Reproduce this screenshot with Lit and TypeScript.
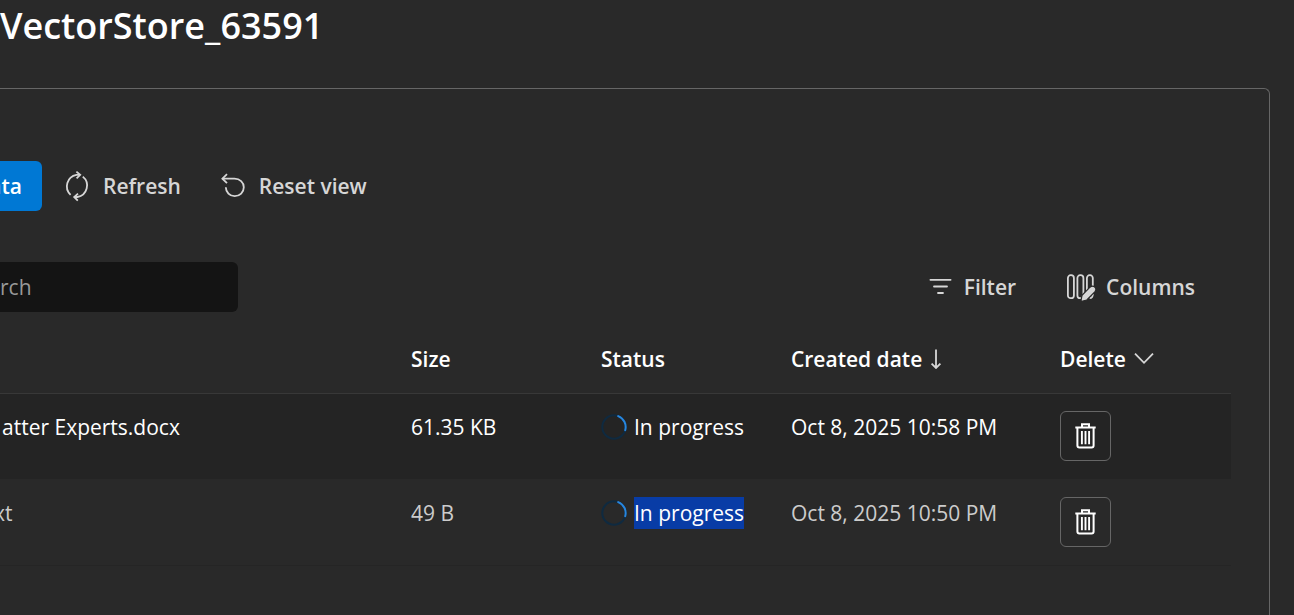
import { LitElement, html, css, svg, nothing } from "lit";
import { customElement, property } from "lit/decorators.js";

interface FileRow {
  name: string;
  size: string;
  status: string;
  created: string;
  active: boolean;
}

const ROWS: FileRow[] = [
  { name: "atter Experts.docx", size: "61.35 KB", status: "In progress", created: "Oct 8, 2025 10:58 PM", active: true },
  { name: "xt", size: "49 B", status: "In progress", created: "Oct 8, 2025 10:50 PM", active: false },
];

const ICONS = {
  refresh: { w: 28, h: 32, body: svg`
    <path d="M7.6 24.8A11.6 11.6 0 0 1 13.4 4.9H16.4M19.8 6.6A11.6 11.6 0 0 1 14.4 27H12" />
    <path d="M13.4 1.6L17.2 4.9L13.6 8.4M15 23.6L11.2 27L14.8 30.6" />` },
  reset: { w: 28, h: 28, body: svg`
    <path d="M3.4 6.7H15.5C20.8 6.7 24.8 10.4 24.8 15.3C24.8 20.3 20.8 24.2 15.7 24.2C10.8 24.2 6.9 20.3 6.8 15.2" />
    <path d="M8 2.2L3.4 6.7L8 11.2" />` },
  filter: { w: 24, h: 20, body: svg`<path d="M2.4 2.8H22.6M6 9.5H19M10 16H15" stroke-linecap="round" />` },
  columns: { w: 30, h: 30, body: svg`
    <rect x="1.9" y="3.2" width="6" height="23" rx="2.8" />
    <rect x="11.4" y="3.2" width="6" height="23" rx="2.8" />
    <path d="M20.9 20V6A2.8 2.8 0 0 1 23.7 3.2H24A2.8 2.8 0 0 1 26.8 6V14M23.6 26.2Q26.8 26 26.8 22" />
    <path d="M14.8 29.6L16 23.4L24 15.2C27.4 12.2 31.8 16.4 28.8 19.8L20.8 28Z" fill="currentColor" stroke="#292929" stroke-width="1.2" />` },
  down: { w: 12, h: 20, body: svg`<path d="M6 .5V19M1.6 14.6L6 19L10.4 14.6" />` },
  chevron: { w: 20, h: 12, body: svg`<path d="M1 .6L10 9.8L19 .6" />` },
  trash: { w: 22, h: 26, body: svg`
    <path d="M7 4.4V1.2H14V4.4M.3 4.4H20.7M2.4 4.4V22.6Q2.4 24.6 4.4 24.6H16.6Q18.6 24.6 18.6 22.6V4.4" stroke-width="2" />
    <path d="M6.9 8V21.2M10.5 8V21.2M14.1 8V21.2" stroke-width="1.9" />` },
};

@customElement("line-icon")
class LineIcon extends LitElement {
  static styles = css`
    :host { display: inline-flex; flex: none; }
    .icon { fill: none; stroke: currentColor; stroke-width: 1.8; display: block; }
  `;
  @property() name: keyof typeof ICONS = "filter";
  render() {
    const i = ICONS[this.name];
    return html`<svg class="icon" width=${i.w} height=${i.h} viewBox="0 0 ${i.w} ${i.h}" aria-hidden="true">${i.body}</svg>`;
  }
}

@customElement("progress-ring")
class ProgressRing extends LitElement {
  static styles = css`
    :host { display: inline-flex; flex: none; }
    .ring { fill: none; stroke-width: 2; }
    .track { stroke: #0f2a40; }
    .arc { stroke: #2886de; stroke-linecap: round; }
  `;
  render() {
    return html`<svg class="ring" width="26" height="26" viewBox="0 0 26 26" aria-hidden="true">
      <circle class="track" cx="13" cy="13" r="11.7" />
      <path class="arc" d="M17.2 2.1A11.7 11.7 0 0 1 24.2 16.2" />
    </svg>`;
  }
}

@customElement("app-root")
class AppRoot extends LitElement {
  static styles = css`
    * { box-sizing: border-box; }
    :host {
      display: flex;
      flex-direction: column;
      min-height: 100vh;
      overflow: hidden;
      background: #292929;
      color: #fff;
      font: 400 21px/32px "Open Sans", "Noto Sans", sans-serif;
    }
    .title { margin: 0; padding-top: 2px; font-size: 36px; line-height: 48px; font-weight: 600; }
    .panel {
      flex: 1;
      margin: 38px 24px 0 0;
      padding: 72px 38px 0 0;
      border: 1px solid #666;
      border-width: 1px 1px 0 0;
      border-top-right-radius: 6px;
    }
    button { font: inherit; font-weight: 600; color: #d6d6d6; background: none; border: 0; padding: 0; cursor: pointer; }
    .commands { display: flex; align-items: center; height: 50px; gap: 38px; }
    .add { width: 42px; height: 50px; margin-right: -17px; display: flex; justify-content: flex-end; align-items: center; padding-right: 20px; background: #0078d4; color: #fff; border-radius: 0 6px 6px 0; }
    .command { display: flex; align-items: center; gap: 12px; }
    .view .command:last-child { gap: 10px; }
    .tools { display: flex; align-items: center; justify-content: space-between; margin-top: 51px; height: 50px; }
    .search { width: 238px; height: 50px; padding: 0; border: 0; border-radius: 0 6px 6px 0; background: #141414; color: #fff; font: inherit; outline: none; }
    .search::placeholder { color: #999; opacity: 1; }
    .view { display: flex; gap: 50px; padding-right: 36px; }
    .files { width: 100%; margin-top: 14px; table-layout: fixed; border-collapse: separate; border-spacing: 0; }
    .size, .status { width: 190px; }
    .created { width: 269px; }
    .delete { width: 171px; }
    .head { padding: 17px 0 18px; text-align: left; font-weight: 600; border-bottom: 1px solid #383838; }
    .sort { color: #fff; display: flex; align-items: center; gap: 8px; }
    .sort line-icon { color: #d6d6d6; }
    .sort .icon-thin { opacity: .9; }
    .cell { height: 86px; padding: 17px 0; vertical-align: top; color: #ccc; border-bottom: 1px solid #252525; white-space: nowrap; }
    .active .cell { background: #242424; color: #fff; border-bottom-color: #292929; }
    .name { padding-left: 2px; }
    .short { text-indent: -6px; }
    .state { display: flex; align-items: center; gap: 7px; }
    .selected { background: #083ca6; color: #fff; }
    .trash { width: 51px; height: 50px; display: flex; align-items: center; justify-content: center; border: 1px solid #666; border-radius: 6px; color: #fff; }
  `;

  render() {
    return html`
      <h1 class="title">VectorStore_63591</h1>
      <section class="panel">
        <div class="commands">
          <button class="add">ata</button>
          <button class="command"><line-icon name="refresh"></line-icon>Refresh</button>
          <button class="command"><line-icon name="reset"></line-icon>Reset view</button>
        </div>
        <div class="tools">
          <input class="search" type="search" placeholder="rch" aria-label="Search" />
          <div class="view">
            <button class="command"><line-icon name="filter"></line-icon>Filter</button>
            <button class="command"><line-icon name="columns"></line-icon>Columns</button>
          </div>
        </div>
        <table class="files">
          <thead>
            <tr>
              <th class="head" aria-label="Name"></th>
              <th class="head size" scope="col">Size</th>
              <th class="head status" scope="col">Status</th>
              <th class="head created" scope="col"><button class="sort">Created date<line-icon name="down"></line-icon></button></th>
              <th class="head delete" scope="col"><button class="sort">Delete<line-icon name="chevron"></line-icon></button></th>
            </tr>
          </thead>
          <tbody>
            ${ROWS.map((r) => html`
              <tr class=${r.active ? "active" : nothing}>
                <td class="cell ${r.active ? "name" : "short"}">${r.name}</td>
                <td class="cell">${r.size}</td>
                <td class="cell"><div class="state"><progress-ring></progress-ring><span class=${r.active ? nothing : "selected"}>${r.status}</span></div></td>
                <td class="cell">${r.created}</td>
                <td class="cell"><button class="trash" aria-label="Delete file"><line-icon name="trash"></line-icon></button></td>
              </tr>`)}
          </tbody>
        </table>
      </section>
    `;
  }
}
